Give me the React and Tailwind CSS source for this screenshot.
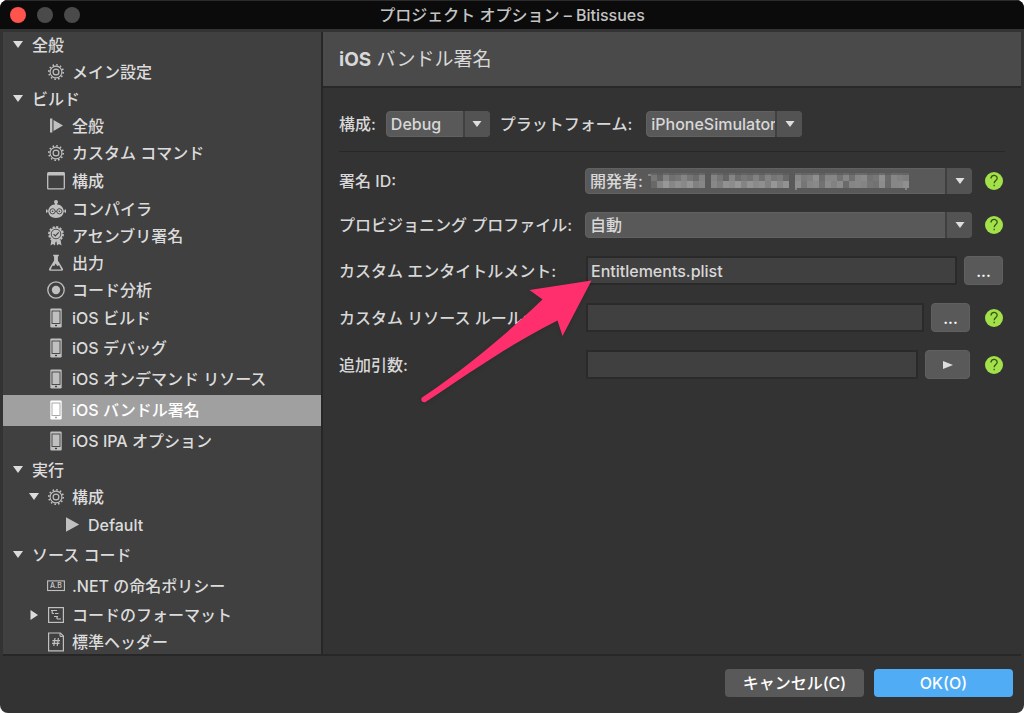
import { useState } from "react";

// mosaic tones over the developer name, upper and lower row, null is a gap
const MOSAIC_TOP = [
  "#7d7d7d", "#666666", "#8a8a8a", "#757575", "#7a7a7a", "#8c8c8c", "#7b7b7b", "#6f6f6f", "#8a8a8a", null, "#8b8b8b",
  "#7a7a7a", "#666666", "#8d8d8d", "#717171", "#7d7d7d", "#767676", "#888888", "#747474", "#8b8b8b", "#7c7c7c", "#818181", "#6b6b6b", null,
  "#919191", "#808080", "#868686", "#999999", "#707070", "#8d8d8d", "#8e8e8e", "#777777", "#8f8f8f", "#747474", "#8e8e8e", "#939393", "#777777",
  "#7d7d7d", "#999999", "#6e6e6e", "#8f8f8f", "#8a8a8a", "#858585",
];
const MOSAIC_BOTTOM = [
  "#6b6b6b", "#8f8f8f", "#a2a2a2", "#8e8e8e", "#9a9a9a", "#929292", "#a0a0a0", "#888888", "#8e8e8e", null, "#919191",
  "#858585", "#9b9b9b", "#959595", "#a2a2a2", "#8c8c8c", "#9e9e9e", "#939393", "#999999", "#888888", "#a1a1a1", "#8f8f8f", "#9d9d9d", null,
  "#999999", "#7c7c7c", "#8e8e8e", "#929292", "#777777", "#949494", "#8a8a8a", "#959595", "#6f6f6f", "#8d8d8d", "#919191", "#8c8c8c", "#7a7a7a",
  "#777777", "#959595", "#6c6c6c", "#8e8e8e", "#909090", "#999999",
];

const GearIcon = () => (
  <svg viewBox="0 0 18 18" className="w-[18px] h-[18px]" fill="none" stroke="currentColor">
    <circle cx="9" cy="9" r="7.2" strokeWidth="1.6" strokeDasharray="1.6 2.17" />
    <circle cx="9" cy="9" r="5.9" strokeWidth="1.1" />
    <circle cx="9" cy="9" r="2.9" strokeWidth="1.2" />
  </svg>
);

const PlayBarIcon = () => (
  <svg viewBox="0 0 18 18" className="w-[18px] h-[18px]" fill="currentColor">
    <path d="M3 1.5h2.4v14H3zM6.5 3l9.5 5.5L6.5 14z" />
  </svg>
);

const PlayIcon = () => (
  <svg viewBox="0 0 18 18" className="w-[18px] h-[18px]" fill="currentColor">
    <path d="M3 1.2l13.2 7.3L3 15.8z" />
  </svg>
);

const WindowIcon = () => (
  <svg viewBox="0 0 18 18" className="w-[18px] h-[18px]" fill="none" stroke="currentColor">
    <rect x="0.7" y="0.7" width="16.6" height="16.2" rx="0.8" strokeWidth="1.3" />
    <path d="M1 2.2h16" strokeWidth="2.6" />
  </svg>
);

const RobotIcon = () => (
  <svg viewBox="0 0 20 18" className="w-5 h-[18px]">
    <g fill="currentColor">
      <circle cx="10" cy="2" r="2" />
      <rect x="9" y="2" width="2" height="4" />
      <path d="M2.3 11.2C2.3 7 5.6 4.2 10 4.2s7.7 2.8 7.7 7c0 4.1-3.4 6.7-7.7 6.7s-7.7-2.6-7.7-6.7z" />
      <rect x="0" y="9.5" width="1.3" height="3.2" />
      <rect x="18.7" y="9.5" width="1.3" height="3.2" />
      <rect x="1" y="10.6" width="18" height="1" />
    </g>
    <g fill="none" stroke="#404040" strokeWidth="0.9">
      <circle cx="6.6" cy="11.3" r="2.6" />
      <circle cx="13.4" cy="11.3" r="2.6" />
      <path d="M9.2 11.3h1.6" />
    </g>
    <circle cx="6.6" cy="11.3" r="0.8" fill="#404040" />
    <circle cx="13.4" cy="11.3" r="0.8" fill="#404040" />
  </svg>
);

const BadgeIcon = () => (
  <svg viewBox="0 0 18 20" className="w-[18px] h-5">
    <path d="M4.5 13.5L3.5 19.5l2.5-1.5 2 1.5 0.5-4h1l0.5 4 2-1.5 2.5 1.5-1-6z" fill="currentColor" />
    <circle cx="9" cy="8" r="6.6" fill="currentColor" />
    <circle cx="9" cy="8" r="7" fill="none" stroke="currentColor" strokeWidth="1.8" strokeDasharray="2.2 1.46" />
    <circle cx="9" cy="8" r="4.8" fill="none" stroke="#404040" strokeWidth="0.9" />
    <path d="M6.5 8.2l1.8 1.8 3.4-3.6" fill="none" stroke="#404040" strokeWidth="1.2" />
  </svg>
);

const FlaskIcon = () => (
  <svg viewBox="0 0 18 18" className="w-[18px] h-[18px]">
    <path d="M6.2 0.8h5.6v1.4h-0.9v4.3l5 8.3c0.5 1-0.1 2-1.2 2H3.3c-1.1 0-1.7-1-1.2-2l5-8.3V2.2H6.2z" fill="currentColor" />
    <path d="M5.6 11.4l1.8 0.6 1.2-2.6 1.7 2.6 1.8-0.8 2.2 4.2H3.7z" fill="#404040" />
  </svg>
);

const RadioIcon = () => (
  <svg viewBox="0 0 18 18" className="w-[18px] h-[18px]">
    <circle cx="9" cy="9" r="8.2" fill="none" stroke="currentColor" strokeWidth="1.3" />
    <circle cx="9" cy="9" r="4.2" fill="currentColor" />
  </svg>
);

const PhoneIcon = ({ selected }) => (
  <svg viewBox="0 0 18 20" className="w-[18px] h-5">
    <rect x="3.3" y="0.5" width="11.4" height="19" rx="1.2" fill="currentColor" />
    <rect x="5" y="3" width="8" height="12.5" fill="none" stroke={selected ? "#a0a0a0" : "#404040"} strokeWidth="0.9" />
    <rect x="8" y="16.8" width="2" height="1.4" fill={selected ? "#a0a0a0" : "#404040"} />
  </svg>
);

const NamingIcon = () => (
  <svg viewBox="0 0 18 12" className="w-[18px] h-3" fill="none" stroke="currentColor">
    <rect x="0.6" y="0.9" width="16.8" height="9.6" strokeWidth="1.1" />
    <text x="9" y="8.4" textAnchor="middle" fontSize="7" fontWeight="600" fill="currentColor" stroke="none">
      A.B
    </text>
  </svg>
);

const FormatIcon = () => (
  <svg viewBox="0 0 18 18" className="w-[18px] h-[18px]" fill="none" stroke="currentColor">
    <rect x="1.6" y="1.6" width="14.8" height="14.8" strokeWidth="1.2" />
    <path d="M4 4.5h6M5.2 4.5v3M5.2 7.5h1.8M8 7.5h3.5M7 10.5h4M10 10.5v2.5M10 13h4" strokeWidth="1.2" />
  </svg>
);

const HashIcon = () => (
  <svg viewBox="0 0 18 20" className="w-[18px] h-5" fill="none" stroke="currentColor">
    <path d="M1.6 1h11.8l3 3v14.8H1.6z" strokeWidth="1.2" />
    <path d="M13 1v3.4h3.4" strokeWidth="1" />
    <path d="M8 6l-1.2 8M11.4 6l-1.2 8M5.4 8.6h7.6M5 11.4h7.6" strokeWidth="1.2" />
  </svg>
);

const TREE = [
  { id: "general", label: "全般", level: 0, open: true, row: "h-[27px]" },
  { id: "main", label: "メイン設定", level: 1, icon: GearIcon, row: "h-[27px]" },
  { id: "build", label: "ビルド", level: 0, open: true, row: "h-[27px]" },
  { id: "build-general", label: "全般", level: 1, icon: PlayBarIcon, row: "h-[27px]" },
  { id: "commands", label: "カスタム コマンド", level: 1, icon: GearIcon, row: "h-[27px]" },
  { id: "config", label: "構成", level: 1, icon: WindowIcon, row: "h-[29px]" },
  { id: "compiler", label: "コンパイラ", level: 1, icon: RobotIcon, row: "h-[27px]" },
  { id: "assembly", label: "アセンブリ署名", level: 1, icon: BadgeIcon, row: "h-[27px]" },
  { id: "output", label: "出力", level: 1, icon: FlaskIcon, row: "h-[27px]" },
  { id: "analysis", label: "コード分析", level: 1, icon: RadioIcon, row: "h-[27px]" },
  { id: "ios-build", label: "iOS ビルド", level: 1, icon: PhoneIcon, row: "h-[29px]" },
  { id: "ios-debug", label: "iOS デバッグ", level: 1, icon: PhoneIcon, row: "h-[31px]" },
  { id: "ios-odr", label: "iOS オンデマンド リソース", level: 1, icon: PhoneIcon, row: "h-[31px]" },
  { id: "ios-sign", label: "iOS バンドル署名", level: 1, icon: PhoneIcon, row: "h-[31px]" },
  { id: "ios-ipa", label: "iOS IPA オプション", level: 1, icon: PhoneIcon, row: "h-[31px]" },
  { id: "run", label: "実行", level: 0, open: true, row: "h-[27px]" },
  { id: "run-config", label: "構成", level: 1, icon: GearIcon, open: true, row: "h-[27px]" },
  { id: "default", label: "Default", level: 2, icon: PlayIcon, row: "h-[29px]" },
  { id: "source", label: "ソース コード", level: 0, open: true, row: "h-[31px]" },
  { id: "naming", label: ".NET の命名ポリシー", level: 1, icon: NamingIcon, row: "h-[31px]" },
  { id: "format", label: "コードのフォーマット", level: 1, icon: FormatIcon, open: false, row: "h-[27px]" },
  { id: "header", label: "標準ヘッダー", level: 1, icon: HashIcon, row: "h-[27px]" },
];

const INDENT = ["pl-[10px]", "pl-[26px]", "pl-[42px]"];

function TreeRow({ item, selected, onSelect }) {
  const Icon = item.icon;
  return (
    <button
      onClick={() => onSelect(item.id)}
      className={`flex w-full shrink-0 items-center pb-[2px] text-left whitespace-nowrap ${item.row} ${INDENT[item.level]} ${
        selected ? "bg-[#a0a0a0] text-white" : "text-[#dcdcdc]"
      }`}
    >
      <span className="w-[10px] shrink-0">
        {item.open !== undefined && (
          <svg viewBox="0 0 10 10" className="w-[10px] h-[10px]" fill="currentColor">
            <path d={item.open ? "M0 1h10L5 8z" : "M1.5 0v10L9 5z"} />
          </svg>
        )}
      </span>
      {Icon ? (
        <span className={`ml-[7px] mr-[6px] flex w-5 shrink-0 justify-center ${selected ? "text-white" : "text-[#c0c0c0]"}`}>
          <Icon selected={selected} />
        </span>
      ) : (
        <span className="w-[9px] shrink-0" />
      )}
      <span>{item.label}</span>
    </button>
  );
}

function Select({ id, options, className, children }) {
  return (
    <div className={`relative h-[26px] ${className}`}>
      <select
        id={id}
        className="h-full w-full appearance-none overflow-hidden rounded border border-[#616161] bg-[#595959] pr-6 pl-1 leading-6 outline-none"
      >
        {options.map((o) => (
          <option key={o}>{o}</option>
        ))}
      </select>
      {children}
      <span className="pointer-events-none absolute top-0 right-0 flex h-full w-[27px] items-center justify-center rounded-r border-l-2 border-[#404040] bg-[#535353]">
        <svg viewBox="0 0 10 6" className="w-[10px] h-[6px]" fill="#dedede">
          <path d="M0.5 0h9L5 6z" />
        </svg>
      </span>
    </div>
  );
}

const TextInput = ({ id, value = "" }) => (
  <input
    id={id}
    defaultValue={value}
    className="ml-px h-[29px] min-w-0 flex-1 border-2 border-[#2a2a2a] bg-[#404040] px-[3px] outline-none"
  />
);

const SmallButton = ({ label, className, children }) => (
  <button aria-label={label} className={`mr-[2px] ml-[7px] flex h-[29px] items-center justify-center rounded border border-[#606060] bg-[#595959] text-white ${className}`}>
    {children}
  </button>
);

const Help = () => (
  <button aria-label="ヘルプ" className="mr-[2px] ml-[13px] flex h-[18px] w-[18px] shrink-0 items-center justify-center rounded-full bg-[#a2e14a]">
    <svg viewBox="0 0 18 18" className="w-[18px] h-[18px]" fill="none" stroke="#3a5514" strokeWidth="1.3">
      <path d="M6 6.6c0-4.2 6.2-4 6.2-0.4 0 2.2-3 2.4-3 5" />
      <path d="M9.2 12.7v1.6" />
    </svg>
  </button>
);

const Row = ({ id, label, children }) => (
  <div className="flex items-center">
    <label htmlFor={id} className="w-[246px] shrink-0 whitespace-nowrap">
      {label}
    </label>
    {children}
  </div>
);

export default function App() {
  const [selected, setSelected] = useState("ios-sign");

  return (
    <div className="h-screen bg-white font-['Inter','Noto_Sans_CJK_JP',sans-serif] text-base leading-6 font-medium text-[#d8d8d8]">
      <div className="flex h-full flex-col overflow-hidden rounded-lg bg-[#333333]">
        <header className="grid h-[29px] shrink-0 grid-cols-[1fr_auto_1fr] items-center border-t border-[#2c2c2c] bg-[#0b0b0b] px-[10px]">
          <div className="flex gap-[11px]">
            <button aria-label="閉じる" className="h-4 w-4 rounded-full bg-[#ff544d]" />
            <button aria-label="しまう" className="h-4 w-4 rounded-full bg-[#4a4a4a]" />
            <button aria-label="拡大" className="h-4 w-4 rounded-full bg-[#4a4a4a]" />
          </div>
          <h1 className="font-medium text-[#c4c4c4]">プロジェクト オプション – Bitissues</h1>
        </header>

        <div className="mx-[3px] mt-[3px] flex min-h-0 flex-1 border-b-2 border-[#272727]">
          <nav className="flex w-[320px] shrink-0 flex-col overflow-hidden border-r-2 border-[#272727] bg-[#404040]">
            {TREE.map((item) => (
              <TreeRow key={item.id} item={item} selected={selected === item.id} onSelect={setSelected} />
            ))}
          </nav>

          <main className="relative min-w-0 flex-1">
            <div className="flex h-14 items-center border-b-2 border-[#282828] bg-[#4a4a4a] px-4 pt-[2px]">
              <h2 className="text-[19px] font-normal">
                <b>iOS</b> バンドル署名
              </h2>
            </div>

            <div className="pt-[23px] pr-4 pl-4">
              <div className="flex items-center">
                <label htmlFor="config" className="mr-[10px]">構成:</label>
                <Select id="config" options={["Debug", "Release"]} className="w-[104px]" />
                <label htmlFor="platform" className="mr-[14px] ml-[10px]">プラットフォーム:</label>
                <Select id="platform" options={["iPhoneSimulator", "iPhone"]} className="w-[156px]" />
              </div>

              <hr className="mt-[14px] mb-4 border-[#272727]" />

              <div className="flex flex-col gap-[18px]">
                <Row id="identity" label="署名 ID:">
                  <Select id="identity" options={["開発者:"]} className="min-w-0 flex-1">
                    <svg viewBox="0 0 262 20" className="pointer-events-none absolute top-1 left-[63px] h-5 w-[262px] opacity-85">
                      {MOSAIC_TOP.map((tone, i) =>
                        tone ? (
                          <g key={i}>
                            <rect x={i * 6 + 3} y="1" width="6" height="2" fill={tone} opacity="0.35" />
                            <rect x={i * 6 + 3} y="3" width="6" height="6" fill={tone} />
                            <rect x={i * 6 + 3} y="9" width="6" height="7" fill={MOSAIC_BOTTOM[i]} />
                          </g>
                        ) : null
                      )}
                      <path d="M0 2h3v2H0zM147 16h2v2h-2zM257 16h2v2h-2z" fill="#8c8c8c" />
                    </svg>
                  </Select>
                  <Help />
                </Row>
                <Row id="profile" label="プロビジョニング プロファイル:">
                  <Select id="profile" options={["自動"]} className="min-w-0 flex-1" />
                  <Help />
                </Row>
                <Row id="entitlements" label="カスタム エンタイトルメント:">
                  <TextInput id="entitlements" value="Entitlements.plist" />
                  <SmallButton label="参照" className="w-[39px]">...</SmallButton>
                </Row>
                <Row id="rules" label="カスタム リソース ルール:">
                  <TextInput id="rules" />
                  <SmallButton label="参照" className="w-[39px]">...</SmallButton>
                  <Help />
                </Row>
                <Row id="args" label="追加引数:">
                  <TextInput id="args" />
                  <SmallButton label="引数の挿入" className="w-[45px]">
                    <svg viewBox="0 0 10 8" className="h-2 w-[10px]" fill="#dedede">
                      <path d="M0 0l10 4-10 4z" />
                    </svg>
                  </SmallButton>
                  <Help />
                </Row>
              </div>
            </div>

            {/* callout arrow pointing at the entitlements field */}
            <svg viewBox="0 0 180 132" className="pointer-events-none absolute top-[244px] left-[94px] h-[132px] w-[180px] drop-shadow-sm">
              <path
                d="M174.5 4.5L112.5 14l13 9.5C96 52 52 90 5 121.5c-2 2.5 0.5 5.5 3.5 4.5C50 99 90 70 140.5 44.5l5 15.5z"
                fill="#ff2f6d"
              />
            </svg>
          </main>
        </div>

        <footer className="flex h-[57px] shrink-0 items-start justify-end gap-[10px] pt-[13px] pr-[11px]">
          <button className="h-7 w-[139px] rounded bg-[#595959] text-white">キャンセル(C)</button>
          <button className="h-7 w-[139px] rounded bg-[#4facf5] text-white">OK(O)</button>
        </footer>
      </div>
    </div>
  );
}
